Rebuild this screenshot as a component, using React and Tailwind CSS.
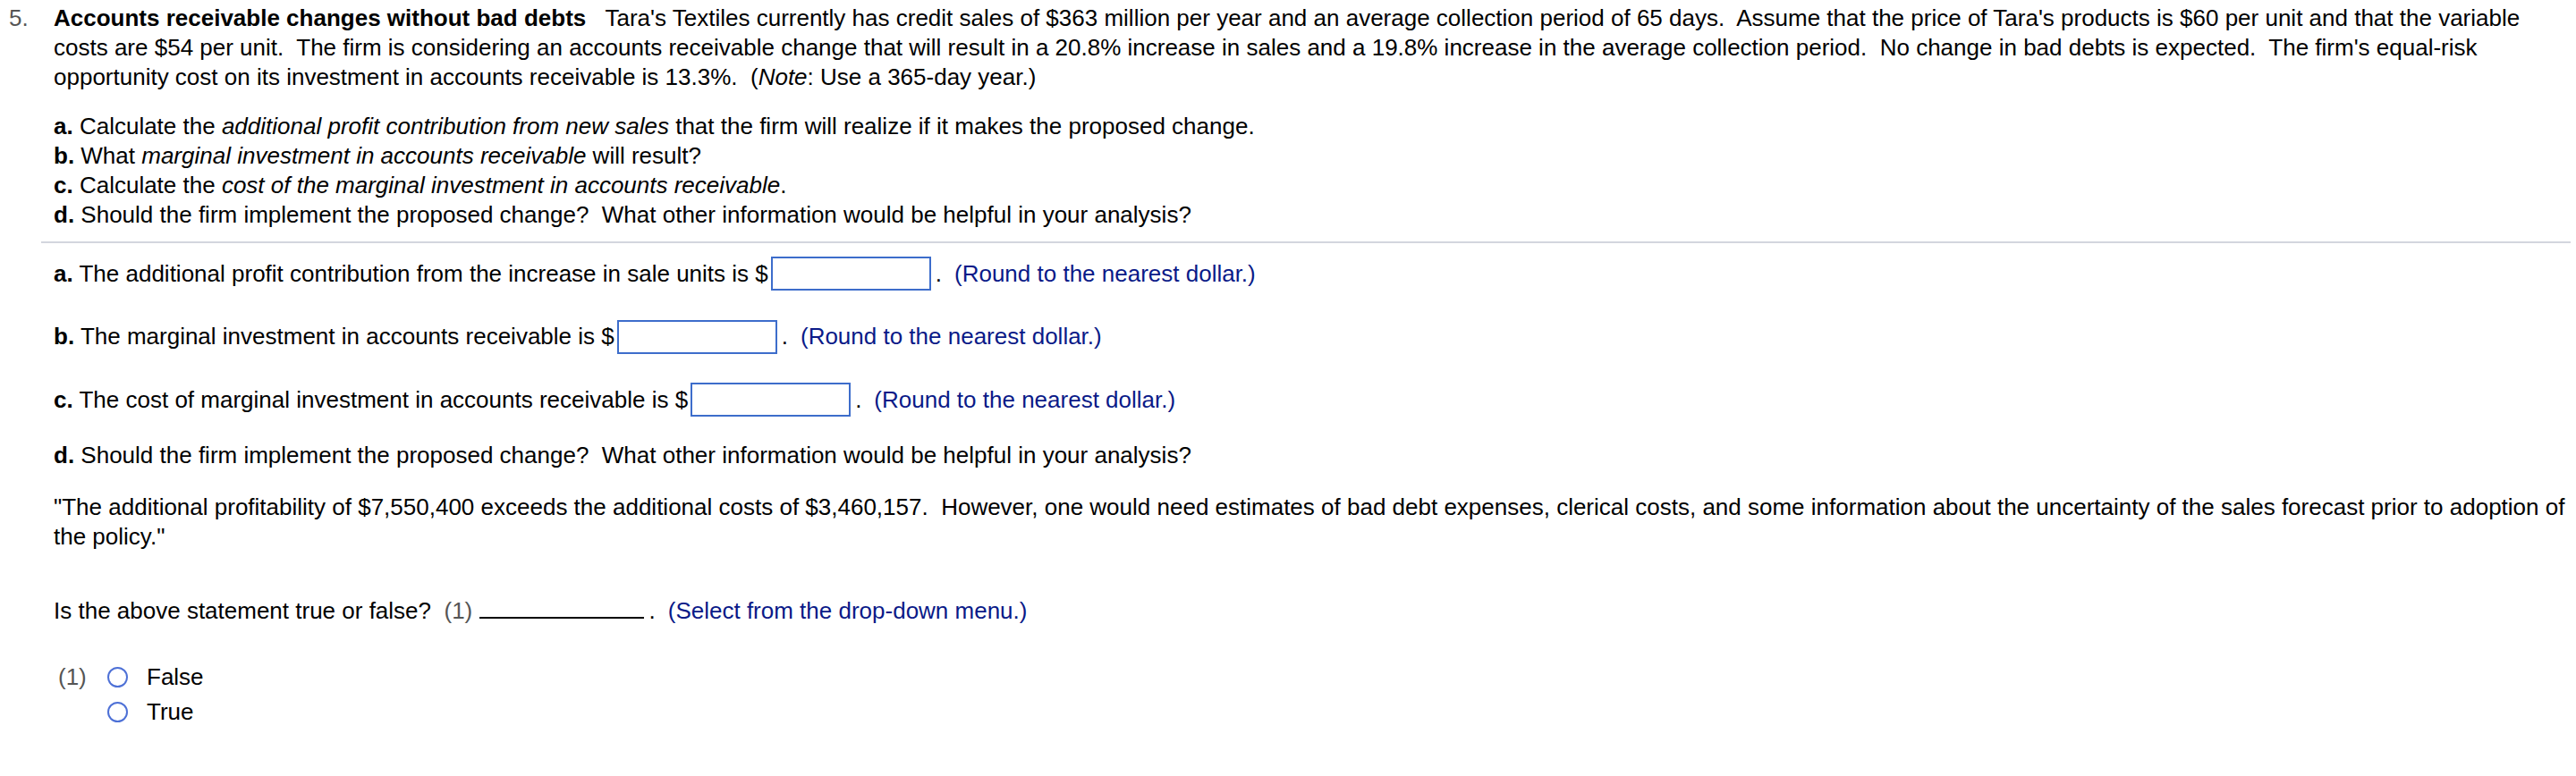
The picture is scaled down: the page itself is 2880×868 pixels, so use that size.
const navy = "text-[#0a1a88]";

function Box({ w }) {
  return (
    <span
      className={`inline-block h-[38px] ml-[3px] border-2 border-[#3d6dcb] bg-white ${w}`}
    />
  );
}

function Radio({ label }) {
  return (
    <div className="flex items-center h-[39px]">
      <span className="inline-block w-[23px] h-[23px] rounded-full border-[2px] border-[#4d70d6]" />
      <span className="ml-[21px]">{label}</span>
    </div>
  );
}

function AnswerRow({ label, text, boxW, className }) {
  return (
    <div className={`flex items-center h-[38px] ${className}`}>
      <span>
        <b>{label}</b> {text}
      </span>
      <Box w={boxW} />
      <span className="ml-[5px]">.</span>
      <span className={`ml-[14px] ${navy}`}>(Round to the nearest dollar.)</span>
    </div>
  );
}

export default function App() {
  return (
    <div
      className="min-h-screen bg-white text-black text-[26px] leading-[33px]"
      style={{ fontFamily: '"Liberation Sans", Arial, sans-serif' }}
    >
      <div className="flex pl-[10px] pr-[6px] pt-[3.5px]">
        <div className="w-[50px] shrink-0 text-[#555]">5.</div>
        <div className="flex-1 min-w-0">
          <p>
            <b>Accounts receivable changes without bad debts</b>
            {"\u00a0\u00a0 "}Tara's Textiles currently has credit sales of $363 million per
            year and an average collection period of 65 days.{"\u00a0 "}Assume that the price
            of Tara's products is $60 per unit and that the variable costs are $54 per
            unit.{"\u00a0 "}The firm is considering an accounts receivable change that will
            result in a 20.8% increase in sales and a 19.8% increase in the average collection
            period.{"\u00a0 "}No change in bad debts is expected.{"\u00a0 "}The firm's
            equal-risk opportunity cost on its investment in accounts receivable is
            13.3%.{"\u00a0 "}(<i>Note</i>: Use a 365-day year.)
          </p>

          <div className="mt-[22px]">
            <p>
              <b>a.</b> Calculate the <i>additional profit contribution from new sales</i> that
              the firm will realize if it makes the proposed change.
            </p>
            <p>
              <b>b.</b> What <i>marginal investment in accounts receivable</i> will result?
            </p>
            <p>
              <b>c.</b> Calculate the <i>cost of the marginal investment in accounts receivable</i>.
            </p>
            <p>
              <b>d.</b> Should the firm implement the proposed change?{"\u00a0 "}What other
              information would be helpful in your analysis?
            </p>
          </div>

          <div className="-ml-[14px] mt-[13.5px] h-[2px] bg-[#d3d6de]" />

          <AnswerRow
            className="mt-[15px]"
            label="a."
            text="The additional profit contribution from the increase in sale units is $"
            boxW="w-[179px]"
          />
          <AnswerRow
            className="mt-[32.5px]"
            label="b."
            text="The marginal investment in accounts receivable is $"
            boxW="w-[179px]"
          />
          <AnswerRow
            className="mt-[32.5px]"
            label="c."
            text="The cost of marginal investment in accounts receivable is $"
            boxW="w-[179px]"
          />

          <p className="mt-[26.5px]">
            <b>d.</b> Should the firm implement the proposed change?{"\u00a0 "}What other
            information would be helpful in your analysis?
          </p>

          <p className="mt-[25.5px]">
            "The additional profitability of $7,550,400 exceeds the additional costs of
            $3,460,157.{"\u00a0 "}However, one would need estimates of bad debt expenses,
            clerical costs, and some information about the uncertainty of the sales forecast
            prior to adoption of the policy."
          </p>

          <p className="mt-[50px]">
            Is the above statement true or false?{"\u00a0 "}
            <span className="text-[#555]">(1)</span>{" "}
            <span className="inline-block w-[184px] h-[2px] bg-black align-baseline" />
            <span className="ml-[6px]">.</span>
            <span className={`ml-[14px] ${navy}`}>(Select from the drop-down menu.)</span>
          </p>

          <div className="flex mt-[37.5px] pl-[5px]">
            <div className="w-[55px] h-[39px] flex items-center text-[#555]">(1)</div>
            <div>
              <Radio label="False" />
              <Radio label="True" />
            </div>
          </div>
        </div>
      </div>
    </div>
  );
}
